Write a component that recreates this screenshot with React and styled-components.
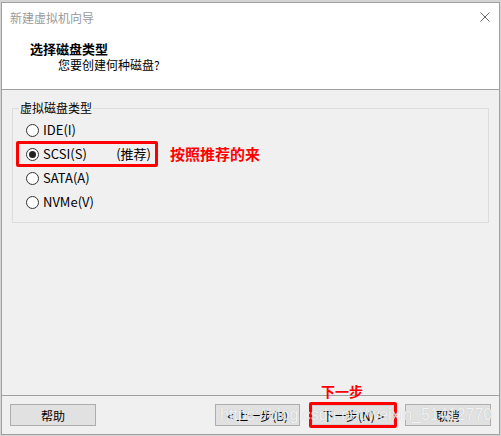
import React from 'react'
import styled, { createGlobalStyle } from 'styled-components'

const GlobalStyle = createGlobalStyle`
  * { box-sizing: border-box; }
  body {
    margin: 0;
    background: #d4d4d4;
    font-family: "Noto Sans CJK SC", "Liberation Sans", sans-serif;
  }
`

const Page = styled.div`
  height: 436px;
  padding: 2px 0 0 1px;
  overflow: hidden;
`

const Janela = styled.div`
  width: 499px;
  height: 433px;
  border: 1px solid #a0a0a0;
  background: #f0f0f0;
  display: flex;
  flex-direction: column;
`

const Cabecalho = styled.div`
  height: 87px;
  flex-shrink: 0;
  background: #ffffff;
  border-bottom: 1px solid #a0a0a0;
`

const BarraTitulo = styled.div`
  height: 28px;
  display: flex;
  align-items: center;
  justify-content: space-between;
  padding: 0 9px 0 8px;
  color: #9a9a9a;
  font-size: 12px;
`

const Titulo = styled.div`
  margin-top: 10px;
  padding-left: 28px;
  font-size: 13px;
  font-weight: bold;
  line-height: 16px;
  color: #000;
`

const SubTitulo = styled.div`
  padding-left: 56px;
  font-size: 12px;
  line-height: 16px;
  color: #000;
`

const Corpo = styled.div`
  flex: 1;
  padding: 10px 10px 0 10px;
`

const Grupo = styled.fieldset`
  margin: 0;
  width: 477px;
  height: 123px;
  padding: 1px 0 0 3px;
  border: 1px solid #dcdcdc;
`

const Legenda = styled.legend`
  margin-left: 3px;
  padding: 0 1px;
  font-size: 12px;
  line-height: 16px;
  color: #000;
`

const LinhaOpcao = styled.div`
  display: flex;
  align-items: center;
  margin-bottom: -2px;
`

const CaixaOpcao = styled.div`
  width: 142px;
  height: 26px;
  display: flex;
  align-items: center;
  padding: 0 4px 0 7px;
  border: 3px solid ${(p) => (p.destaque ? '#ff0000' : 'transparent')};
  border-radius: 2px;
  font-size: 13px;
  color: #000;
`

const Radio = styled.span`
  width: 13px;
  height: 13px;
  flex-shrink: 0;
  border: 1px solid #333;
  border-radius: 50%;
  background: #fff;
  display: flex;
  align-items: center;
  justify-content: center;

  &::after {
    content: '';
    width: 7px;
    height: 7px;
    border-radius: 50%;
    background: ${(p) => (p.marcado ? '#222' : 'transparent')};
  }
`

const TextoOpcao = styled.span`
  margin-left: 4px;
  line-height: 16px;
`

const Recomendado = styled.span`
  margin-left: auto;
  line-height: 16px;
`

const Anotacao = styled.span`
  margin-left: 12px;
  color: #ff0000;
  font-weight: bold;
  font-size: 15px;
  line-height: 18px;
`

const Rodape = styled.div`
  height: 39px;
  flex-shrink: 0;
  border-top: 1px solid #a0a0a0;
  display: flex;
  align-items: center;
  padding: 0 8px;
  position: relative;
`

const Botao = styled.div`
  width: ${(p) => p.largura || 86}px;
  height: 22px;
  border: 1px solid #adadad;
  background: #e1e1e1;
  display: flex;
  align-items: center;
  justify-content: center;
  font-size: 12px;
  color: #000;
`

const Espaco = styled.div`
  flex: 1;
`

const DestaqueProximo = styled.div`
  position: relative;
  width: 88px;
  height: 26px;
  margin-left: 9px;
  border: 3px solid #ff0000;
  border-radius: 2px;
  display: flex;

  ${Botao} {
    width: 100%;
    height: 100%;
    border-color: #d0d0d0;
  }
`

const AnotacaoProximo = styled.span`
  position: absolute;
  left: 9px;
  top: -22px;
  color: #ff0000;
  font-weight: bold;
  font-size: 14px;
  line-height: 16px;
  white-space: nowrap;
`

const Cancelar = styled(Botao)`
  margin-left: 8px;
`

/* marca d'agua do print, por cima dos botoes */
const MarcaDagua = styled.span`
  position: absolute;
  left: 218px;
  top: 10px;
  font-family: "Liberation Sans", sans-serif;
  font-size: 16px;
  line-height: 18px;
  color: rgba(255, 255, 255, 0.82);
  text-shadow: 0 0 1px rgba(0, 0, 0, 0.2);
  white-space: nowrap;
  pointer-events: none;
`

const opcoes = [
  { id: 'ide', texto: 'IDE(I)' },
  { id: 'scsi', texto: 'SCSI(S)', recomendado: true },
  { id: 'sata', texto: 'SATA(A)' },
  { id: 'nvme', texto: 'NVMe(V)' },
]

export default class App extends React.Component {
  render() {
    const listaOpcoes = opcoes.map((opcao) => {
      const marcado = opcao.id === 'scsi'
      return (
        <LinhaOpcao key={opcao.id}>
          <CaixaOpcao destaque={marcado}>
            <Radio marcado={marcado} />
            <TextoOpcao>{opcao.texto}</TextoOpcao>
            {opcao.recomendado && <Recomendado>(推荐)</Recomendado>}
          </CaixaOpcao>
          {marcado && <Anotacao>按照推荐的来</Anotacao>}
        </LinhaOpcao>
      )
    })

    return (
      <Page>
        <GlobalStyle />
        <Janela>
          <Cabecalho>
            <BarraTitulo>
              <span>新建虚拟机向导</span>
              <svg width="10" height="10" viewBox="0 0 10 10">
                <path d="M0.5 0.5 L9.5 9.5 M9.5 0.5 L0.5 9.5" stroke="#6a6a6a" strokeWidth="1" />
              </svg>
            </BarraTitulo>
            <Titulo>选择磁盘类型</Titulo>
            <SubTitulo>您要创建何种磁盘?</SubTitulo>
          </Cabecalho>
          <Corpo>
            <Grupo>
              <Legenda>虚拟磁盘类型</Legenda>
              {listaOpcoes}
            </Grupo>
          </Corpo>
          <Rodape>
            <Botao>帮助</Botao>
            <Espaco />
            <Botao largura={85}>&lt; 上一步(B)</Botao>
            <DestaqueProximo>
              <AnotacaoProximo>下一步</AnotacaoProximo>
              <Botao>下一步(N) &gt;</Botao>
            </DestaqueProximo>
            <Cancelar>取消</Cancelar>
            <MarcaDagua>https://blog.csdn.net/weixin_51412770</MarcaDagua>
          </Rodape>
        </Janela>
      </Page>
    )
  }
}
